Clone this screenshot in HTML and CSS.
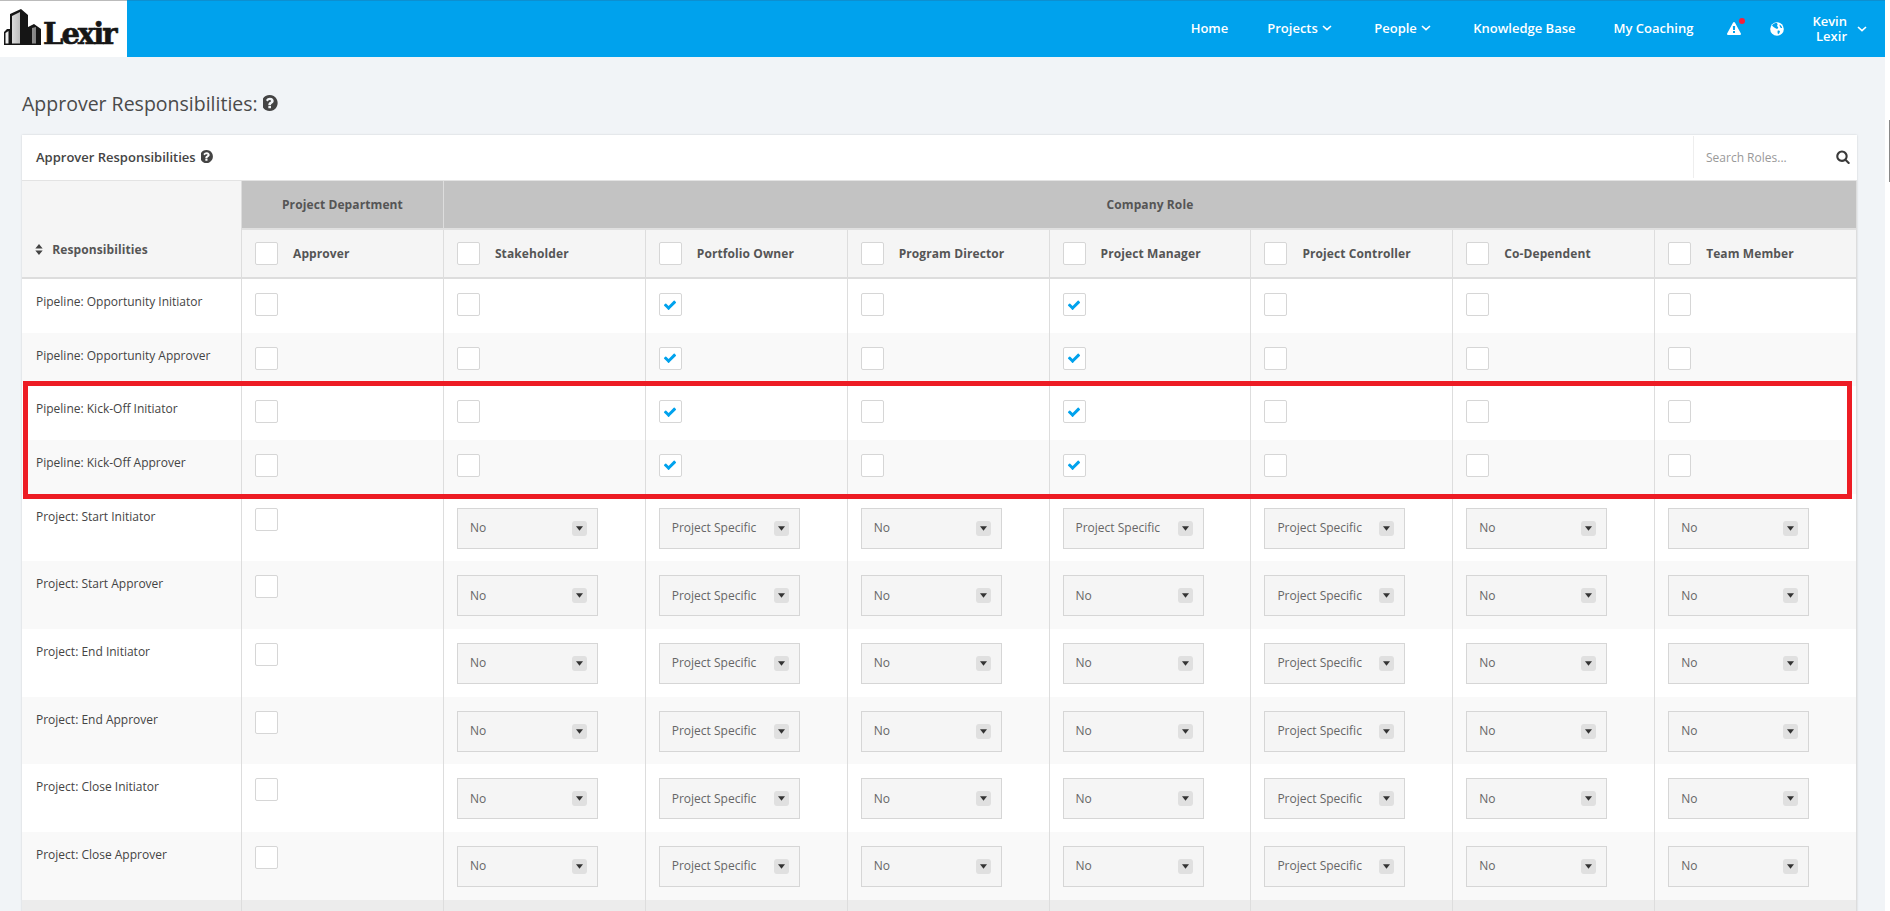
FILE: index.html
```html
<!DOCTYPE html>
<html lang="en">
<head>
    <meta charset="UTF-8">
    <meta name="viewport" content="width=device-width, initial-scale=1.0">
    <title>Approver Responsibilities</title>
    <link rel="stylesheet" href="styles.css">
</head>
<body>
    <svg class="icon-defs" aria-hidden="true">
        <symbol id="i-help" viewBox="128 128 1536 1536"><path d="M896 1376v-192q0-14-9-23t-23-9h-192q-14 0-23 9t-9 23v192q0 14 9 23t23 9h192q14 0 23-9t9-23zm256-672q0-88-55.5-163t-138.5-116-170-41q-243 0-371 213-15 24 8 42l132 100q7 6 19 6 16 0 25-12 53-68 86-92 34-24 86-24 48 0 85.5 26t37.5 59q0 38-20 61t-68 45q-63 28-115.5 86.5t-52.5 125.5v36q0 14 9 23t23 9h192q14 0 23-9t9-23q0-19 21.5-49.5t54.5-49.5q32-18 49-28.5t46-35 44.5-48 28-60.5 12.5-81zm384 192q0 209-103 385.5t-279.5 279.5-385.5 103-385.5-103-279.5-279.5-103-385.5 103-385.5 279.5-279.5 385.5-103 385.5 103 279.5 279.5 103 385.5z"/></symbol>
        <symbol id="i-check" viewBox="0 0 1792 1792"><path d="M1671 566q0 40-28 68l-724 724-136 136q-28 28-68 28t-68-28l-136-136-362-362q-28-28-28-68t28-68l136-136q28-28 68-28t68 28l294 295 656-657q28-28 68-28t68 28l136 136q28 28 28 68z"/></symbol>
        <symbol id="i-search" viewBox="64 64 1664 1728"><path d="M1216 832q0-185-131.5-316.5t-316.5-131.5-316.5 131.5-131.5 316.5 131.5 316.5 316.5 131.5 316.5-131.5 131.5-316.5zm512 832q0 52-38 90t-90 38q-54 0-90-38l-343-342q-179 124-399 124-143 0-273.5-55.5t-225-150-150-225-55.5-273.5 55.5-273.5 150-225 225-150 273.5-55.5 273.5 55.5 225 150 150 225 55.5 273.5q0 220-124 399l343 343q37 37 37 90z"/></symbol>
        <symbol id="i-warning" viewBox="0 0 1792 1792"><path d="M1024 1375v-190q0-14-9.5-23.5t-22.5-9.5h-192q-13 0-22.5 9.5t-9.5 23.5v190q0 14 9.5 23.5t22.5 9.5h192q13 0 22.5-9.5t9.5-23.5zm-2-374l18-459q0-12-10-19-13-11-24-11h-220q-11 0-24 11-10 7-10 21l17 457q0 10 10 16.5t24 6.5h185q14 0 23.5-6.5t10.5-16.5zm-14-934l768 1408q35 63-2 126-17 29-46.5 46t-63.5 17h-1536q-34 0-63.5-17t-46.5-46q-37-63-2-126l768-1408q17-31 47-49t65-18 65 18 47 49z"/></symbol>
        <symbol id="i-angle" viewBox="0 0 10 6"><path d="M1 1l4 3.6L9 1" fill="none" stroke="currentColor" stroke-width="1.6"/></symbol>
        <symbol id="i-caret" viewBox="0 0 8 5"><path d="M0 0h8L4 5z"/></symbol>
    </svg>

    <div class="page">
        <header class="navbar">
            <a class="logo">
                <svg class="logo-mark" viewBox="0 0 40 38" width="40" height="38">
                    <defs>
                        <linearGradient id="face" x1="0" x2="1" y1="0" y2="0">
                            <stop offset="0" stop-color="#f4f4f4"/>
                            <stop offset="1" stop-color="#808080"/>
                        </linearGradient>
                    </defs>
                    <path d="M1 37V24l3-3h3V6L18 1l7 6v12l6-3 7 5v16z" fill="#151515"/>
                    <path d="M2.500 35.500V25l3-2v12.500zM9 35.500V8l8-4v31.500zM29 35.500V20l4-1v16.500z" fill="url(#face)"/>
                </svg>
                <span class="logo-text">Lexir</span>
            </a>
            <nav class="nav-links">
                <a class="nav-link">Home</a>
                <a class="nav-link has-caret">Projects <svg class="nav-angle"><use href="#i-angle"/></svg></a>
                <a class="nav-link has-caret">People <svg class="nav-angle"><use href="#i-angle"/></svg></a>
                <a class="nav-link">Knowledge Base</a>
                <a class="nav-link nav-last">My Coaching</a>
                <a class="nav-alert">
                    <svg class="nav-icon"><use href="#i-warning"/></svg>
                    <span class="alert-dot"></span>
                </a>
                <a class="nav-globe">
                    <svg class="nav-icon" viewBox="0 0 14 14">
                        <circle cx="7" cy="7" r="6.8" fill="#fff"/>
                        <path d="M2 3.200C3.400 1.600 5 1 6.800 1c.7.600 1 1.300.6 2-.5.600-.3 1.200.3 1.700.9.700.5 1.600-.4 2.100-1 .3-1.400-.5-2.200-.9C4 5.400 3 5 2 3.200z" fill="#00a2ed"/>
                        <path d="M9.600 2.500c1.300.7 2.300 2 2.600 3.400-.8.400-1.700-.2-2.100-1-.3-.7-.8-1.500-.5-2.400zM7.800 8.500c1.100-.3 2 .2 2.200 1-.3 1.200-1 2.300-1.900 2.700-.6-.8-.8-2.500-.3-3.700z" fill="#00a2ed"/>
                    </svg>
                </a>
                <a class="nav-user">
                    <span class="user-name">Kevin<br>Lexir</span>
                    <svg class="nav-angle"><use href="#i-angle"/></svg>
                </a>
            </nav>
        </header>

        <main class="content">
            <h1 class="page-title">Approver Responsibilities: <svg class="help-icon"><use href="#i-help"/></svg></h1>

            <section class="panel">
                <div class="panel-head">
                    <h2 class="panel-title">Approver Responsibilities <svg class="help-small"><use href="#i-help"/></svg></h2>
                    <div class="search">
                        <input type="text" class="search-input" placeholder="Search Roles...">
                        <svg class="search-icon"><use href="#i-search"/></svg>
                    </div>
                </div>

                <table class="grid">
                    <colgroup>
                        <col class="col-name">
                        <col span="8" class="col-role">
                    </colgroup>
                    <thead>
                        <tr class="head-group">
                            <th rowspan="2" class="head-name">
                                <svg class="sort-icon" viewBox="0 0 8 12"><path d="M4 0l4 5H0zM4 12L0 7h8z"/></svg>
                                Responsibilities
                            </th>
                            <th>Project Department</th>
                            <th colspan="7">Company Role</th>
                        </tr>
                        <tr class="head-roles">
                            <th><div class="role"><span class="box"></span>Approver</div></th>
                            <th><div class="role"><span class="box"></span>Stakeholder</div></th>
                            <th><div class="role"><span class="box"></span>Portfolio Owner</div></th>
                            <th><div class="role"><span class="box"></span>Program Director</div></th>
                            <th><div class="role"><span class="box"></span>Project Manager</div></th>
                            <th><div class="role"><span class="box"></span>Project Controller</div></th>
                            <th><div class="role"><span class="box"></span>Co-Dependent</div></th>
                            <th><div class="role"><span class="box"></span>Team Member</div></th>
                        </tr>
                    </thead>
                    <tbody>
                        <tr class="row-pipeline">
                            <td>Pipeline: Opportunity Initiator</td>
                            <td><span class="box"></span></td>
                            <td><span class="box"></span></td>
                            <td><span class="box"><svg class="tick"><use href="#i-check"/></svg></span></td>
                            <td><span class="box"></span></td>
                            <td><span class="box"><svg class="tick"><use href="#i-check"/></svg></span></td>
                            <td><span class="box"></span></td>
                            <td><span class="box"></span></td>
                            <td><span class="box"></span></td>
                        </tr>
                        <tr class="row-pipeline">
                            <td>Pipeline: Opportunity Approver</td>
                            <td><span class="box"></span></td>
                            <td><span class="box"></span></td>
                            <td><span class="box"><svg class="tick"><use href="#i-check"/></svg></span></td>
                            <td><span class="box"></span></td>
                            <td><span class="box"><svg class="tick"><use href="#i-check"/></svg></span></td>
                            <td><span class="box"></span></td>
                            <td><span class="box"></span></td>
                            <td><span class="box"></span></td>
                        </tr>
                        <tr class="row-pipeline">
                            <td>Pipeline: Kick-Off Initiator</td>
                            <td><span class="box"></span></td>
                            <td><span class="box"></span></td>
                            <td><span class="box"><svg class="tick"><use href="#i-check"/></svg></span></td>
                            <td><span class="box"></span></td>
                            <td><span class="box"><svg class="tick"><use href="#i-check"/></svg></span></td>
                            <td><span class="box"></span></td>
                            <td><span class="box"></span></td>
                            <td><span class="box"></span></td>
                        </tr>
                        <tr class="row-pipeline">
                            <td>Pipeline: Kick-Off Approver</td>
                            <td><span class="box"></span></td>
                            <td><span class="box"></span></td>
                            <td><span class="box"><svg class="tick"><use href="#i-check"/></svg></span></td>
                            <td><span class="box"></span></td>
                            <td><span class="box"><svg class="tick"><use href="#i-check"/></svg></span></td>
                            <td><span class="box"></span></td>
                            <td><span class="box"></span></td>
                            <td><span class="box"></span></td>
                        </tr>
                        <tr class="row-project">
                            <td>Project: Start Initiator</td>
                            <td><span class="box"></span></td>
                            <td><div class="pick">No<span class="pick-btn"><svg><use href="#i-caret"/></svg></span></div></td>
                            <td><div class="pick">Project Specific<span class="pick-btn"><svg><use href="#i-caret"/></svg></span></div></td>
                            <td><div class="pick">No<span class="pick-btn"><svg><use href="#i-caret"/></svg></span></div></td>
                            <td><div class="pick">Project Specific<span class="pick-btn"><svg><use href="#i-caret"/></svg></span></div></td>
                            <td><div class="pick">Project Specific<span class="pick-btn"><svg><use href="#i-caret"/></svg></span></div></td>
                            <td><div class="pick">No<span class="pick-btn"><svg><use href="#i-caret"/></svg></span></div></td>
                            <td><div class="pick">No<span class="pick-btn"><svg><use href="#i-caret"/></svg></span></div></td>
                        </tr>
                        <tr class="row-project">
                            <td>Project: Start Approver</td>
                            <td><span class="box"></span></td>
                            <td><div class="pick">No<span class="pick-btn"><svg><use href="#i-caret"/></svg></span></div></td>
                            <td><div class="pick">Project Specific<span class="pick-btn"><svg><use href="#i-caret"/></svg></span></div></td>
                            <td><div class="pick">No<span class="pick-btn"><svg><use href="#i-caret"/></svg></span></div></td>
                            <td><div class="pick">No<span class="pick-btn"><svg><use href="#i-caret"/></svg></span></div></td>
                            <td><div class="pick">Project Specific<span class="pick-btn"><svg><use href="#i-caret"/></svg></span></div></td>
                            <td><div class="pick">No<span class="pick-btn"><svg><use href="#i-caret"/></svg></span></div></td>
                            <td><div class="pick">No<span class="pick-btn"><svg><use href="#i-caret"/></svg></span></div></td>
                        </tr>
                        <tr class="row-project">
                            <td>Project: End Initiator</td>
                            <td><span class="box"></span></td>
                            <td><div class="pick">No<span class="pick-btn"><svg><use href="#i-caret"/></svg></span></div></td>
                            <td><div class="pick">Project Specific<span class="pick-btn"><svg><use href="#i-caret"/></svg></span></div></td>
                            <td><div class="pick">No<span class="pick-btn"><svg><use href="#i-caret"/></svg></span></div></td>
                            <td><div class="pick">No<span class="pick-btn"><svg><use href="#i-caret"/></svg></span></div></td>
                            <td><div class="pick">Project Specific<span class="pick-btn"><svg><use href="#i-caret"/></svg></span></div></td>
                            <td><div class="pick">No<span class="pick-btn"><svg><use href="#i-caret"/></svg></span></div></td>
                            <td><div class="pick">No<span class="pick-btn"><svg><use href="#i-caret"/></svg></span></div></td>
                        </tr>
                        <tr class="row-project">
                            <td>Project: End Approver</td>
                            <td><span class="box"></span></td>
                            <td><div class="pick">No<span class="pick-btn"><svg><use href="#i-caret"/></svg></span></div></td>
                            <td><div class="pick">Project Specific<span class="pick-btn"><svg><use href="#i-caret"/></svg></span></div></td>
                            <td><div class="pick">No<span class="pick-btn"><svg><use href="#i-caret"/></svg></span></div></td>
                            <td><div class="pick">No<span class="pick-btn"><svg><use href="#i-caret"/></svg></span></div></td>
                            <td><div class="pick">Project Specific<span class="pick-btn"><svg><use href="#i-caret"/></svg></span></div></td>
                            <td><div class="pick">No<span class="pick-btn"><svg><use href="#i-caret"/></svg></span></div></td>
                            <td><div class="pick">No<span class="pick-btn"><svg><use href="#i-caret"/></svg></span></div></td>
                        </tr>
                        <tr class="row-project">
                            <td>Project: Close Initiator</td>
                            <td><span class="box"></span></td>
                            <td><div class="pick">No<span class="pick-btn"><svg><use href="#i-caret"/></svg></span></div></td>
                            <td><div class="pick">Project Specific<span class="pick-btn"><svg><use href="#i-caret"/></svg></span></div></td>
                            <td><div class="pick">No<span class="pick-btn"><svg><use href="#i-caret"/></svg></span></div></td>
                            <td><div class="pick">No<span class="pick-btn"><svg><use href="#i-caret"/></svg></span></div></td>
                            <td><div class="pick">Project Specific<span class="pick-btn"><svg><use href="#i-caret"/></svg></span></div></td>
                            <td><div class="pick">No<span class="pick-btn"><svg><use href="#i-caret"/></svg></span></div></td>
                            <td><div class="pick">No<span class="pick-btn"><svg><use href="#i-caret"/></svg></span></div></td>
                        </tr>
                        <tr class="row-project">
                            <td>Project: Close Approver</td>
                            <td><span class="box"></span></td>
                            <td><div class="pick">No<span class="pick-btn"><svg><use href="#i-caret"/></svg></span></div></td>
                            <td><div class="pick">Project Specific<span class="pick-btn"><svg><use href="#i-caret"/></svg></span></div></td>
                            <td><div class="pick">No<span class="pick-btn"><svg><use href="#i-caret"/></svg></span></div></td>
                            <td><div class="pick">No<span class="pick-btn"><svg><use href="#i-caret"/></svg></span></div></td>
                            <td><div class="pick">Project Specific<span class="pick-btn"><svg><use href="#i-caret"/></svg></span></div></td>
                            <td><div class="pick">No<span class="pick-btn"><svg><use href="#i-caret"/></svg></span></div></td>
                            <td><div class="pick">No<span class="pick-btn"><svg><use href="#i-caret"/></svg></span></div></td>
                        </tr>
                        <tr class="row-more">
                            <td></td><td></td><td></td><td></td><td></td><td></td><td></td><td></td><td></td>
                        </tr>
                    </tbody>
                </table>

                <div class="highlight"></div>
            </section>
        </main>
    </div>

    <div class="gutter"><span class="gutter-thumb"></span></div>
</body>
</html>
```

FILE: styles.css
```css
* {
    box-sizing: border-box;
}

html, body {
    height: 911px;
    margin: 0;
    overflow: hidden;
}

body {
    display: flex;
    background-color: #fff;
    color: #444;
    font-family: "Open Sans", sans-serif;
    font-size: 12px;
}

.icon-defs {
    position: absolute;
    width: 0;
    height: 0;
}

.page {
    width: 1885px;
    height: 911px;
    overflow: hidden;
    background-color: #f1f4f7;
}

.gutter {
    position: relative;
    width: 5px;
}

.gutter-thumb {
    position: absolute;
    top: 120px;
    right: 0;
    width: 1px;
    height: 62px;
    background-color: #888;
}

/* top bar */
.navbar {
    display: flex;
    justify-content: space-between;
    height: 57px;
    background-color: #00a2ed;
    border-top: 1px solid #0d8fd0;
    color: #fff;
}

.logo {
    display: flex;
    align-items: flex-end;
    width: 127px;
    height: 57px;
    margin-top: -1px;
    padding: 0 0 11px 3px;
    background-color: #fff;
    border-top: 1px solid #bbb;
}

.logo-mark {
    flex: none;
}

.logo-text {
    color: #161616;
    font-family: "DejaVu Serif", serif;
    font-size: 29px;
    font-weight: 700;
    line-height: 24px;
    letter-spacing: -2px;
    -webkit-text-stroke: 0.6px #161616;
}

.nav-links {
    display: flex;
    align-items: center;
    padding-right: 18px;
    font-size: 13px;
    font-weight: 600;
}

.nav-link {
    margin-bottom: 2px;
    margin-left: 39px;
    white-space: nowrap;
}

.nav-last {
    margin-left: 38px;
}

.has-caret {
    padding-right: 3px;
}

.nav-angle {
    width: 10px;
    height: 6px;
    margin-left: 1px;
    vertical-align: 2px;
}

.nav-alert {
    position: relative;
    display: flex;
    margin-left: 34px;
}

.nav-icon {
    display: block;
    width: 14px;
    height: 14px;
    fill: #fff;
}

.alert-dot {
    position: absolute;
    top: -4px;
    right: -4px;
    width: 6px;
    height: 6px;
    border-radius: 50%;
    background-color: #f5203c;
}

.nav-globe {
    margin-left: 29px;
}

.nav-user {
    display: flex;
    align-items: center;
    margin-left: 28px;
}

.user-name {
    margin-bottom: 1px;
    line-height: 15px;
    text-align: right;
}

.nav-user .nav-angle {
    margin-left: 10px;
}

/* page body */
.content {
    padding: 30px 28px 0 22px;
}

.page-title {
    display: flex;
    align-items: center;
    height: 32px;
    margin: 0 0 16px;
    color: #4a4a4a;
    font-size: 19.5px;
    font-weight: 500;
    white-space: pre;
}

.help-icon {
    width: 16px;
    height: 16px;
    fill: #444;
}

.panel {
    position: relative;
    background-color: #fff;
    box-shadow: 0 0 2px rgba(0, 0, 0, 0.15);
}

.panel-head {
    display: flex;
    justify-content: space-between;
    height: 46px;
    border-bottom: 1px solid #e3e3e3;
}

.panel-title {
    display: flex;
    align-items: center;
    gap: 2px;
    margin: 0 0 2px 14px;
    color: #444;
    font-size: 13px;
    font-weight: 600;
    white-space: pre;
}

.help-small {
    width: 13px;
    height: 13px;
    fill: #444;
}

.search {
    display: flex;
    align-items: center;
    width: 164px;
    height: 42px;
    margin-top: 1px;
    border-left: 1px solid #eee;
}

.search-input {
    width: 130px;
    padding: 0 0 0 12px;
    border: 0;
    outline: none;
    color: #666;
    font-family: "Open Sans", sans-serif;
    font-size: 12px;
}

.search-input::placeholder {
    color: #999;
}

.search-icon {
    width: 14px;
    height: 14px;
    margin-left: 12px;
    fill: #3a3a3a;
}

/* table */
.grid {
    width: 1835px;
    table-layout: fixed;
    border-collapse: separate;
    border-spacing: 0;
}

.col-name {
    width: 220px;
}

.col-role {
    width: 201.875px;
}

.grid th, .grid td {
    padding: 0;
    border-right: 1px solid #ddd;
}

.grid th {
    color: #555;
    font-size: 12px;
    font-weight: 700;
    letter-spacing: 0.1px;
}

.head-group th {
    height: 49px;
    padding-bottom: 1px;
    background-color: #c3c3c3;
    border-bottom: 2px solid #e0e0e0;
}

.head-group .head-name {
    padding: 60px 0 0 13px;
    background-color: #f5f5f5;
    border-bottom: 2px solid #ddd;
    text-align: left;
    vertical-align: top;
}

.sort-icon {
    width: 8px;
    height: 11px;
    margin-right: 6px;
    vertical-align: -1px;
    fill: #444;
}

.head-roles th {
    height: 49px;
    background-color: #f5f5f5;
    border-bottom: 2px solid #ddd;
    text-align: left;
}

.role {
    display: flex;
    align-items: center;
    gap: 15px;
    padding-left: 13px;
}

.box {
    display: flex;
    flex: none;
    align-items: center;
    justify-content: center;
    width: 23px;
    height: 23px;
    background-color: #fff;
    border: 1px solid #d6d6d6;
    border-radius: 2px;
}

.tick {
    width: 14px;
    height: 14px;
    fill: #00a2ed;
}

.grid td {
    padding: 14px 0 0 13px;
    vertical-align: top;
    line-height: 18px;
}

.grid td:first-child {
    padding-left: 14px;
}

.grid tbody tr:nth-child(even) td {
    background-color: #f9f9f9;
}

.row-pipeline td {
    height: 53.67px;
}

.row-project td {
    height: 67.67px;
}

.row-more td {
    height: 30px;
}

.grid tbody .row-more td {
    background-color: #ececec;
}

.pick {
    display: flex;
    align-items: center;
    justify-content: space-between;
    width: 141px;
    height: 41px;
    padding: 0 10px 0 12px;
    background-color: #f5f5f5;
    border: 1px solid #d6d6d6;
    color: #666;
}

.pick-btn {
    display: flex;
    align-items: center;
    justify-content: center;
    width: 15px;
    height: 15px;
    border-radius: 3px;
    background-color: #e0e0e0;
}

.pick-btn svg {
    width: 7px;
    height: 5px;
    fill: #333;
}

/* red annotation drawn over the pipeline rows */
.highlight {
    position: absolute;
    top: 246px;
    left: 1px;
    width: 1829px;
    height: 118px;
    border: 5px solid #ed1c24;
}
```
